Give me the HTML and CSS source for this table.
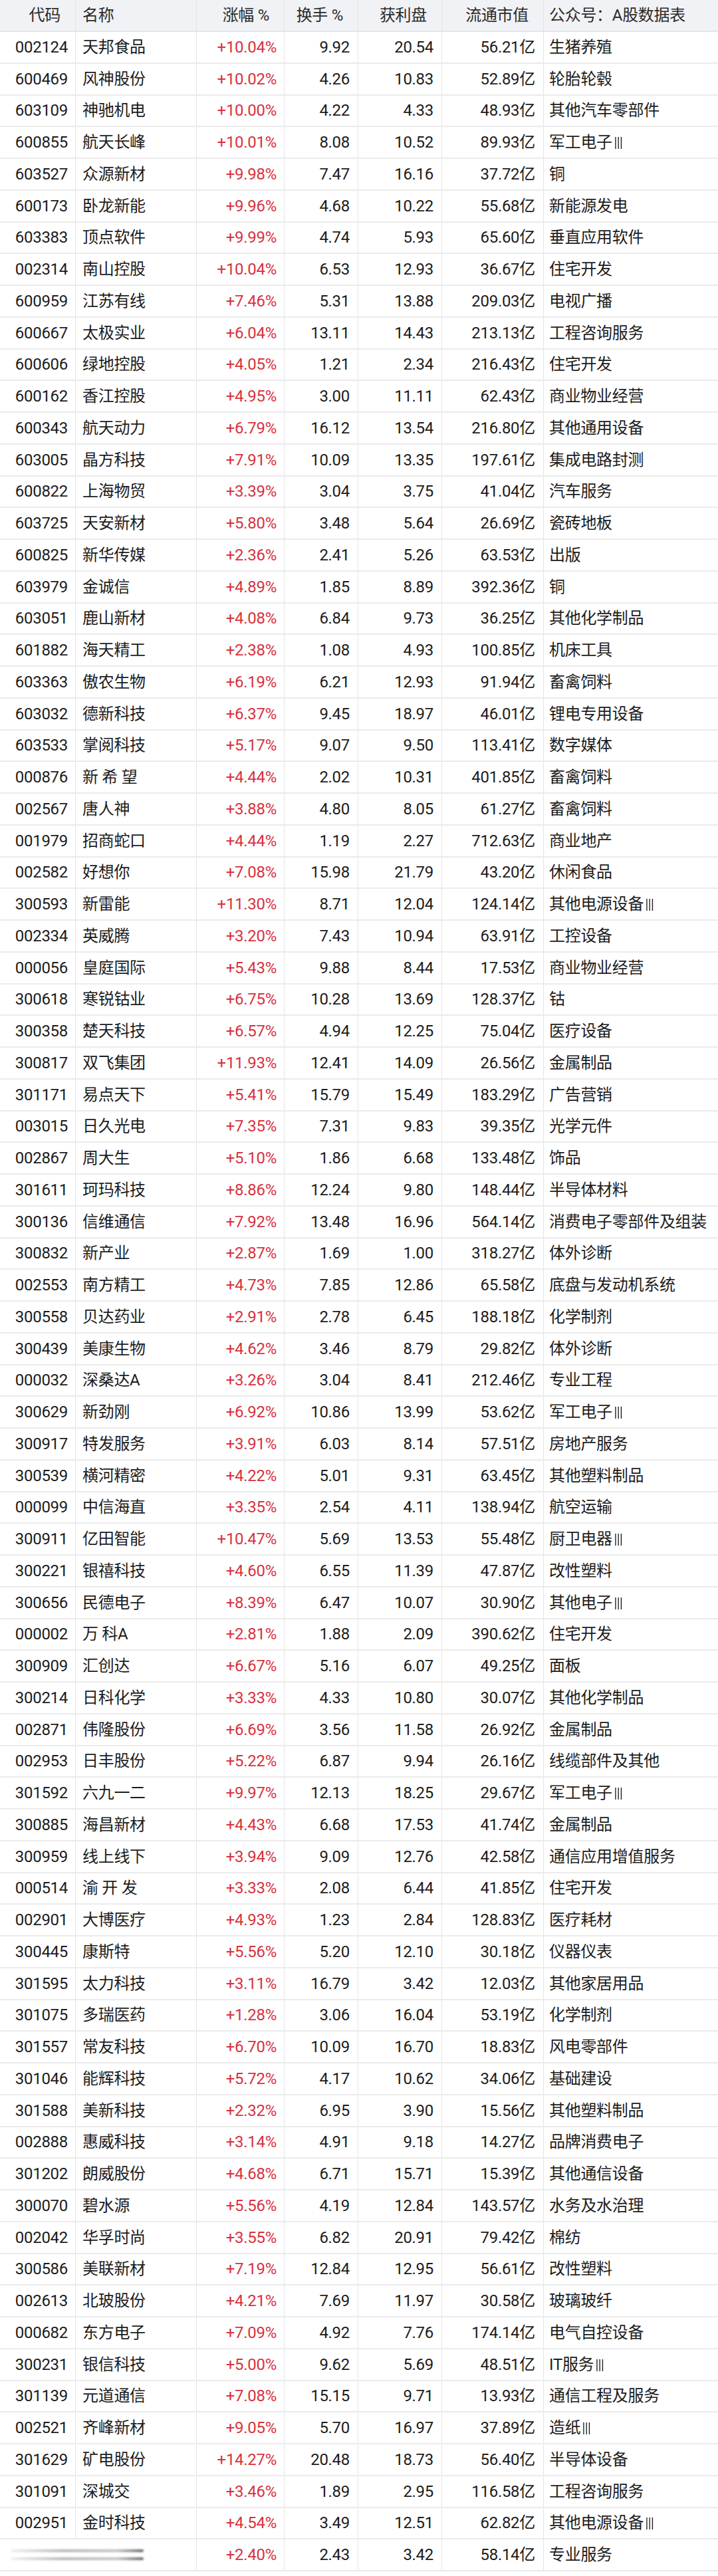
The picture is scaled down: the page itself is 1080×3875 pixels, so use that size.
FILE: index.html
```html
<!DOCTYPE html>
<html lang="zh-CN">
<head>
<meta charset="utf-8">
<title>A股数据表</title>
<link rel="stylesheet" href="styles.css">
</head>
<body>
<div class="sheet">
<div class="row head"><span class="c">代码</span><span class="n">名称</span><span class="p">涨幅 %</span><span class="t">换手 %</span><span class="g">获利盘</span><span class="m">流通市值</span><span class="i">公众号：A股数据表</span></div>
<div class="row"><span class="c">002124</span><span class="n">天邦食品</span><span class="p">+10.04%</span><span class="t">9.92</span><span class="g">20.54</span><span class="m">56.21亿</span><span class="i">生猪养殖</span></div>
<div class="row"><span class="c">600469</span><span class="n">风神股份</span><span class="p">+10.02%</span><span class="t">4.26</span><span class="g">10.83</span><span class="m">52.89亿</span><span class="i">轮胎轮毂</span></div>
<div class="row"><span class="c">603109</span><span class="n">神驰机电</span><span class="p">+10.00%</span><span class="t">4.22</span><span class="g">4.33</span><span class="m">48.93亿</span><span class="i">其他汽车零部件</span></div>
<div class="row"><span class="c">600855</span><span class="n">航天长峰</span><span class="p">+10.01%</span><span class="t">8.08</span><span class="g">10.52</span><span class="m">89.93亿</span><span class="i">军工电子<b class="r">Ⅲ</b></span></div>
<div class="row"><span class="c">603527</span><span class="n">众源新材</span><span class="p">+9.98%</span><span class="t">7.47</span><span class="g">16.16</span><span class="m">37.72亿</span><span class="i">铜</span></div>
<div class="row"><span class="c">600173</span><span class="n">卧龙新能</span><span class="p">+9.96%</span><span class="t">4.68</span><span class="g">10.22</span><span class="m">55.68亿</span><span class="i">新能源发电</span></div>
<div class="row"><span class="c">603383</span><span class="n">顶点软件</span><span class="p">+9.99%</span><span class="t">4.74</span><span class="g">5.93</span><span class="m">65.60亿</span><span class="i">垂直应用软件</span></div>
<div class="row"><span class="c">002314</span><span class="n">南山控股</span><span class="p">+10.04%</span><span class="t">6.53</span><span class="g">12.93</span><span class="m">36.67亿</span><span class="i">住宅开发</span></div>
<div class="row"><span class="c">600959</span><span class="n">江苏有线</span><span class="p">+7.46%</span><span class="t">5.31</span><span class="g">13.88</span><span class="m">209.03亿</span><span class="i">电视广播</span></div>
<div class="row"><span class="c">600667</span><span class="n">太极实业</span><span class="p">+6.04%</span><span class="t">13.11</span><span class="g">14.43</span><span class="m">213.13亿</span><span class="i">工程咨询服务</span></div>
<div class="row"><span class="c">600606</span><span class="n">绿地控股</span><span class="p">+4.05%</span><span class="t">1.21</span><span class="g">2.34</span><span class="m">216.43亿</span><span class="i">住宅开发</span></div>
<div class="row"><span class="c">600162</span><span class="n">香江控股</span><span class="p">+4.95%</span><span class="t">3.00</span><span class="g">11.11</span><span class="m">62.43亿</span><span class="i">商业物业经营</span></div>
<div class="row"><span class="c">600343</span><span class="n">航天动力</span><span class="p">+6.79%</span><span class="t">16.12</span><span class="g">13.54</span><span class="m">216.80亿</span><span class="i">其他通用设备</span></div>
<div class="row"><span class="c">603005</span><span class="n">晶方科技</span><span class="p">+7.91%</span><span class="t">10.09</span><span class="g">13.35</span><span class="m">197.61亿</span><span class="i">集成电路封测</span></div>
<div class="row"><span class="c">600822</span><span class="n">上海物贸</span><span class="p">+3.39%</span><span class="t">3.04</span><span class="g">3.75</span><span class="m">41.04亿</span><span class="i">汽车服务</span></div>
<div class="row"><span class="c">603725</span><span class="n">天安新材</span><span class="p">+5.80%</span><span class="t">3.48</span><span class="g">5.64</span><span class="m">26.69亿</span><span class="i">瓷砖地板</span></div>
<div class="row"><span class="c">600825</span><span class="n">新华传媒</span><span class="p">+2.36%</span><span class="t">2.41</span><span class="g">5.26</span><span class="m">63.53亿</span><span class="i">出版</span></div>
<div class="row"><span class="c">603979</span><span class="n">金诚信</span><span class="p">+4.89%</span><span class="t">1.85</span><span class="g">8.89</span><span class="m">392.36亿</span><span class="i">铜</span></div>
<div class="row"><span class="c">603051</span><span class="n">鹿山新材</span><span class="p">+4.08%</span><span class="t">6.84</span><span class="g">9.73</span><span class="m">36.25亿</span><span class="i">其他化学制品</span></div>
<div class="row"><span class="c">601882</span><span class="n">海天精工</span><span class="p">+2.38%</span><span class="t">1.08</span><span class="g">4.93</span><span class="m">100.85亿</span><span class="i">机床工具</span></div>
<div class="row"><span class="c">603363</span><span class="n">傲农生物</span><span class="p">+6.19%</span><span class="t">6.21</span><span class="g">12.93</span><span class="m">91.94亿</span><span class="i">畜禽饲料</span></div>
<div class="row"><span class="c">603032</span><span class="n">德新科技</span><span class="p">+6.37%</span><span class="t">9.45</span><span class="g">18.97</span><span class="m">46.01亿</span><span class="i">锂电专用设备</span></div>
<div class="row"><span class="c">603533</span><span class="n">掌阅科技</span><span class="p">+5.17%</span><span class="t">9.07</span><span class="g">9.50</span><span class="m">113.41亿</span><span class="i">数字媒体</span></div>
<div class="row"><span class="c">000876</span><span class="n">新 希 望</span><span class="p">+4.44%</span><span class="t">2.02</span><span class="g">10.31</span><span class="m">401.85亿</span><span class="i">畜禽饲料</span></div>
<div class="row"><span class="c">002567</span><span class="n">唐人神</span><span class="p">+3.88%</span><span class="t">4.80</span><span class="g">8.05</span><span class="m">61.27亿</span><span class="i">畜禽饲料</span></div>
<div class="row"><span class="c">001979</span><span class="n">招商蛇口</span><span class="p">+4.44%</span><span class="t">1.19</span><span class="g">2.27</span><span class="m">712.63亿</span><span class="i">商业地产</span></div>
<div class="row"><span class="c">002582</span><span class="n">好想你</span><span class="p">+7.08%</span><span class="t">15.98</span><span class="g">21.79</span><span class="m">43.20亿</span><span class="i">休闲食品</span></div>
<div class="row"><span class="c">300593</span><span class="n">新雷能</span><span class="p">+11.30%</span><span class="t">8.71</span><span class="g">12.04</span><span class="m">124.14亿</span><span class="i">其他电源设备<b class="r">Ⅲ</b></span></div>
<div class="row"><span class="c">002334</span><span class="n">英威腾</span><span class="p">+3.20%</span><span class="t">7.43</span><span class="g">10.94</span><span class="m">63.91亿</span><span class="i">工控设备</span></div>
<div class="row"><span class="c">000056</span><span class="n">皇庭国际</span><span class="p">+5.43%</span><span class="t">9.88</span><span class="g">8.44</span><span class="m">17.53亿</span><span class="i">商业物业经营</span></div>
<div class="row"><span class="c">300618</span><span class="n">寒锐钴业</span><span class="p">+6.75%</span><span class="t">10.28</span><span class="g">13.69</span><span class="m">128.37亿</span><span class="i">钴</span></div>
<div class="row"><span class="c">300358</span><span class="n">楚天科技</span><span class="p">+6.57%</span><span class="t">4.94</span><span class="g">12.25</span><span class="m">75.04亿</span><span class="i">医疗设备</span></div>
<div class="row"><span class="c">300817</span><span class="n">双飞集团</span><span class="p">+11.93%</span><span class="t">12.41</span><span class="g">14.09</span><span class="m">26.56亿</span><span class="i">金属制品</span></div>
<div class="row"><span class="c">301171</span><span class="n">易点天下</span><span class="p">+5.41%</span><span class="t">15.79</span><span class="g">15.49</span><span class="m">183.29亿</span><span class="i">广告营销</span></div>
<div class="row"><span class="c">003015</span><span class="n">日久光电</span><span class="p">+7.35%</span><span class="t">7.31</span><span class="g">9.83</span><span class="m">39.35亿</span><span class="i">光学元件</span></div>
<div class="row"><span class="c">002867</span><span class="n">周大生</span><span class="p">+5.10%</span><span class="t">1.86</span><span class="g">6.68</span><span class="m">133.48亿</span><span class="i">饰品</span></div>
<div class="row"><span class="c">301611</span><span class="n">珂玛科技</span><span class="p">+8.86%</span><span class="t">12.24</span><span class="g">9.80</span><span class="m">148.44亿</span><span class="i">半导体材料</span></div>
<div class="row"><span class="c">300136</span><span class="n">信维通信</span><span class="p">+7.92%</span><span class="t">13.48</span><span class="g">16.96</span><span class="m">564.14亿</span><span class="i">消费电子零部件及组装</span></div>
<div class="row"><span class="c">300832</span><span class="n">新产业</span><span class="p">+2.87%</span><span class="t">1.69</span><span class="g">1.00</span><span class="m">318.27亿</span><span class="i">体外诊断</span></div>
<div class="row"><span class="c">002553</span><span class="n">南方精工</span><span class="p">+4.73%</span><span class="t">7.85</span><span class="g">12.86</span><span class="m">65.58亿</span><span class="i">底盘与发动机系统</span></div>
<div class="row"><span class="c">300558</span><span class="n">贝达药业</span><span class="p">+2.91%</span><span class="t">2.78</span><span class="g">6.45</span><span class="m">188.18亿</span><span class="i">化学制剂</span></div>
<div class="row"><span class="c">300439</span><span class="n">美康生物</span><span class="p">+4.62%</span><span class="t">3.46</span><span class="g">8.79</span><span class="m">29.82亿</span><span class="i">体外诊断</span></div>
<div class="row"><span class="c">000032</span><span class="n">深桑达A</span><span class="p">+3.26%</span><span class="t">3.04</span><span class="g">8.41</span><span class="m">212.46亿</span><span class="i">专业工程</span></div>
<div class="row"><span class="c">300629</span><span class="n">新劲刚</span><span class="p">+6.92%</span><span class="t">10.86</span><span class="g">13.99</span><span class="m">53.62亿</span><span class="i">军工电子<b class="r">Ⅲ</b></span></div>
<div class="row"><span class="c">300917</span><span class="n">特发服务</span><span class="p">+3.91%</span><span class="t">6.03</span><span class="g">8.14</span><span class="m">57.51亿</span><span class="i">房地产服务</span></div>
<div class="row"><span class="c">300539</span><span class="n">横河精密</span><span class="p">+4.22%</span><span class="t">5.01</span><span class="g">9.31</span><span class="m">63.45亿</span><span class="i">其他塑料制品</span></div>
<div class="row"><span class="c">000099</span><span class="n">中信海直</span><span class="p">+3.35%</span><span class="t">2.54</span><span class="g">4.11</span><span class="m">138.94亿</span><span class="i">航空运输</span></div>
<div class="row"><span class="c">300911</span><span class="n">亿田智能</span><span class="p">+10.47%</span><span class="t">5.69</span><span class="g">13.53</span><span class="m">55.48亿</span><span class="i">厨卫电器<b class="r">Ⅲ</b></span></div>
<div class="row"><span class="c">300221</span><span class="n">银禧科技</span><span class="p">+4.60%</span><span class="t">6.55</span><span class="g">11.39</span><span class="m">47.87亿</span><span class="i">改性塑料</span></div>
<div class="row"><span class="c">300656</span><span class="n">民德电子</span><span class="p">+8.39%</span><span class="t">6.47</span><span class="g">10.07</span><span class="m">30.90亿</span><span class="i">其他电子<b class="r">Ⅲ</b></span></div>
<div class="row"><span class="c">000002</span><span class="n">万 科A</span><span class="p">+2.81%</span><span class="t">1.88</span><span class="g">2.09</span><span class="m">390.62亿</span><span class="i">住宅开发</span></div>
<div class="row"><span class="c">300909</span><span class="n">汇创达</span><span class="p">+6.67%</span><span class="t">5.16</span><span class="g">6.07</span><span class="m">49.25亿</span><span class="i">面板</span></div>
<div class="row"><span class="c">300214</span><span class="n">日科化学</span><span class="p">+3.33%</span><span class="t">4.33</span><span class="g">10.80</span><span class="m">30.07亿</span><span class="i">其他化学制品</span></div>
<div class="row"><span class="c">002871</span><span class="n">伟隆股份</span><span class="p">+6.69%</span><span class="t">3.56</span><span class="g">11.58</span><span class="m">26.92亿</span><span class="i">金属制品</span></div>
<div class="row"><span class="c">002953</span><span class="n">日丰股份</span><span class="p">+5.22%</span><span class="t">6.87</span><span class="g">9.94</span><span class="m">26.16亿</span><span class="i">线缆部件及其他</span></div>
<div class="row"><span class="c">301592</span><span class="n">六九一二</span><span class="p">+9.97%</span><span class="t">12.13</span><span class="g">18.25</span><span class="m">29.67亿</span><span class="i">军工电子<b class="r">Ⅲ</b></span></div>
<div class="row"><span class="c">300885</span><span class="n">海昌新材</span><span class="p">+4.43%</span><span class="t">6.68</span><span class="g">17.53</span><span class="m">41.74亿</span><span class="i">金属制品</span></div>
<div class="row"><span class="c">300959</span><span class="n">线上线下</span><span class="p">+3.94%</span><span class="t">9.09</span><span class="g">12.76</span><span class="m">42.58亿</span><span class="i">通信应用增值服务</span></div>
<div class="row"><span class="c">000514</span><span class="n">渝 开 发</span><span class="p">+3.33%</span><span class="t">2.08</span><span class="g">6.44</span><span class="m">41.85亿</span><span class="i">住宅开发</span></div>
<div class="row"><span class="c">002901</span><span class="n">大博医疗</span><span class="p">+4.93%</span><span class="t">1.23</span><span class="g">2.84</span><span class="m">128.83亿</span><span class="i">医疗耗材</span></div>
<div class="row"><span class="c">300445</span><span class="n">康斯特</span><span class="p">+5.56%</span><span class="t">5.20</span><span class="g">12.10</span><span class="m">30.18亿</span><span class="i">仪器仪表</span></div>
<div class="row"><span class="c">301595</span><span class="n">太力科技</span><span class="p">+3.11%</span><span class="t">16.79</span><span class="g">3.42</span><span class="m">12.03亿</span><span class="i">其他家居用品</span></div>
<div class="row"><span class="c">301075</span><span class="n">多瑞医药</span><span class="p">+1.28%</span><span class="t">3.06</span><span class="g">16.04</span><span class="m">53.19亿</span><span class="i">化学制剂</span></div>
<div class="row"><span class="c">301557</span><span class="n">常友科技</span><span class="p">+6.70%</span><span class="t">10.09</span><span class="g">16.70</span><span class="m">18.83亿</span><span class="i">风电零部件</span></div>
<div class="row"><span class="c">301046</span><span class="n">能辉科技</span><span class="p">+5.72%</span><span class="t">4.17</span><span class="g">10.62</span><span class="m">34.06亿</span><span class="i">基础建设</span></div>
<div class="row"><span class="c">301588</span><span class="n">美新科技</span><span class="p">+2.32%</span><span class="t">6.95</span><span class="g">3.90</span><span class="m">15.56亿</span><span class="i">其他塑料制品</span></div>
<div class="row"><span class="c">002888</span><span class="n">惠威科技</span><span class="p">+3.14%</span><span class="t">4.91</span><span class="g">9.18</span><span class="m">14.27亿</span><span class="i">品牌消费电子</span></div>
<div class="row"><span class="c">301202</span><span class="n">朗威股份</span><span class="p">+4.68%</span><span class="t">6.71</span><span class="g">15.71</span><span class="m">15.39亿</span><span class="i">其他通信设备</span></div>
<div class="row"><span class="c">300070</span><span class="n">碧水源</span><span class="p">+5.56%</span><span class="t">4.19</span><span class="g">12.84</span><span class="m">143.57亿</span><span class="i">水务及水治理</span></div>
<div class="row"><span class="c">002042</span><span class="n">华孚时尚</span><span class="p">+3.55%</span><span class="t">6.82</span><span class="g">20.91</span><span class="m">79.42亿</span><span class="i">棉纺</span></div>
<div class="row"><span class="c">300586</span><span class="n">美联新材</span><span class="p">+7.19%</span><span class="t">12.84</span><span class="g">12.95</span><span class="m">56.61亿</span><span class="i">改性塑料</span></div>
<div class="row"><span class="c">002613</span><span class="n">北玻股份</span><span class="p">+4.21%</span><span class="t">7.69</span><span class="g">11.97</span><span class="m">30.58亿</span><span class="i">玻璃玻纤</span></div>
<div class="row"><span class="c">000682</span><span class="n">东方电子</span><span class="p">+7.09%</span><span class="t">4.92</span><span class="g">7.76</span><span class="m">174.14亿</span><span class="i">电气自控设备</span></div>
<div class="row"><span class="c">300231</span><span class="n">银信科技</span><span class="p">+5.00%</span><span class="t">9.62</span><span class="g">5.69</span><span class="m">48.51亿</span><span class="i">IT服务<b class="r">Ⅲ</b></span></div>
<div class="row"><span class="c">301139</span><span class="n">元道通信</span><span class="p">+7.08%</span><span class="t">15.15</span><span class="g">9.71</span><span class="m">13.93亿</span><span class="i">通信工程及服务</span></div>
<div class="row"><span class="c">002521</span><span class="n">齐峰新材</span><span class="p">+9.05%</span><span class="t">5.70</span><span class="g">16.97</span><span class="m">37.89亿</span><span class="i">造纸<b class="r">Ⅲ</b></span></div>
<div class="row"><span class="c">301629</span><span class="n">矿电股份</span><span class="p">+14.27%</span><span class="t">20.48</span><span class="g">18.73</span><span class="m">56.40亿</span><span class="i">半导体设备</span></div>
<div class="row"><span class="c">301091</span><span class="n">深城交</span><span class="p">+3.46%</span><span class="t">1.89</span><span class="g">2.95</span><span class="m">116.58亿</span><span class="i">工程咨询服务</span></div>
<div class="row"><span class="c">002951</span><span class="n">金时科技</span><span class="p">+4.54%</span><span class="t">3.49</span><span class="g">12.51</span><span class="m">62.82亿</span><span class="i">其他电源设备<b class="r">Ⅲ</b></span></div>
<div class="row"><span class="blurred"><i class="smear"></i><i class="smear"></i></span><span class="p">+2.40%</span><span class="t">2.43</span><span class="g">3.42</span><span class="m">58.14亿</span><span class="i">专业服务</span></div>
</div>
</body>
</html>
```

FILE: styles.css
```css
html, body {
  margin: 0;
  padding: 0;
  background: #ffffff;
}

body {
  font-family: Roboto, "Noto Sans CJK SC", sans-serif;
  font-size: 24px;
  color: #1c1c1c;
}

.sheet {
  width: 1080px;
}

.row {
  display: grid;
  grid-template-columns: 114px 182px 132px 111px 126px 153px 262px;
  height: 47.75px;
  box-sizing: border-box;
  border-bottom: 2px solid #ebebeb;
  align-items: stretch;
}

.row > span {
  display: flex;
  align-items: center;
  border-right: 1px solid #e4e4e4;
  white-space: pre;
  overflow: hidden;
  line-height: 1;
  letter-spacing: -0.3px;
}

.row > span:last-child {
  border-right: none;
}

.c, .p, .t, .g, .m {
  justify-content: flex-end;
  padding-right: 11px;
}

.t, .g, .m {
  padding-right: 12px;
}

.n {
  padding-left: 10px;
}

.i {
  padding-left: 8px;
}

.p {
  color: #d8323d;
}

.r {
  display: inline-block;
  font-weight: normal;
  font-family: "Noto Sans CJK SC", sans-serif;
  font-size: 24px;
  width: 16px;
  margin-left: 2px;
  transform: scaleX(0.6);
  transform-origin: left center;
  letter-spacing: 0;
}

.head {
  height: 48px;
  background: #f1f2f5;
  border-bottom: 2px solid #e3e4e7;
  color: #2a2a2a;
}

.head .p {
  color: #2a2a2a;
}

.head .c, .head .p, .head .t, .head .g, .head .m {
  padding-right: 22px;
}

.head .i {
  padding-left: 8px;
}

.blurred {
  grid-column: span 2;
  flex-direction: column;
  justify-content: center;
  align-items: flex-start !important;
  gap: 8px;
  padding-left: 16px;
}

.smear {
  display: block;
  width: 200px;
  height: 4px;
  border-radius: 2px;
  background: linear-gradient(90deg, rgba(150,150,150,0.15), rgba(120,120,120,0.55) 40%, rgba(120,120,120,0.45) 80%, rgba(60,60,60,0.8));
  filter: blur(1.5px);
}
```
